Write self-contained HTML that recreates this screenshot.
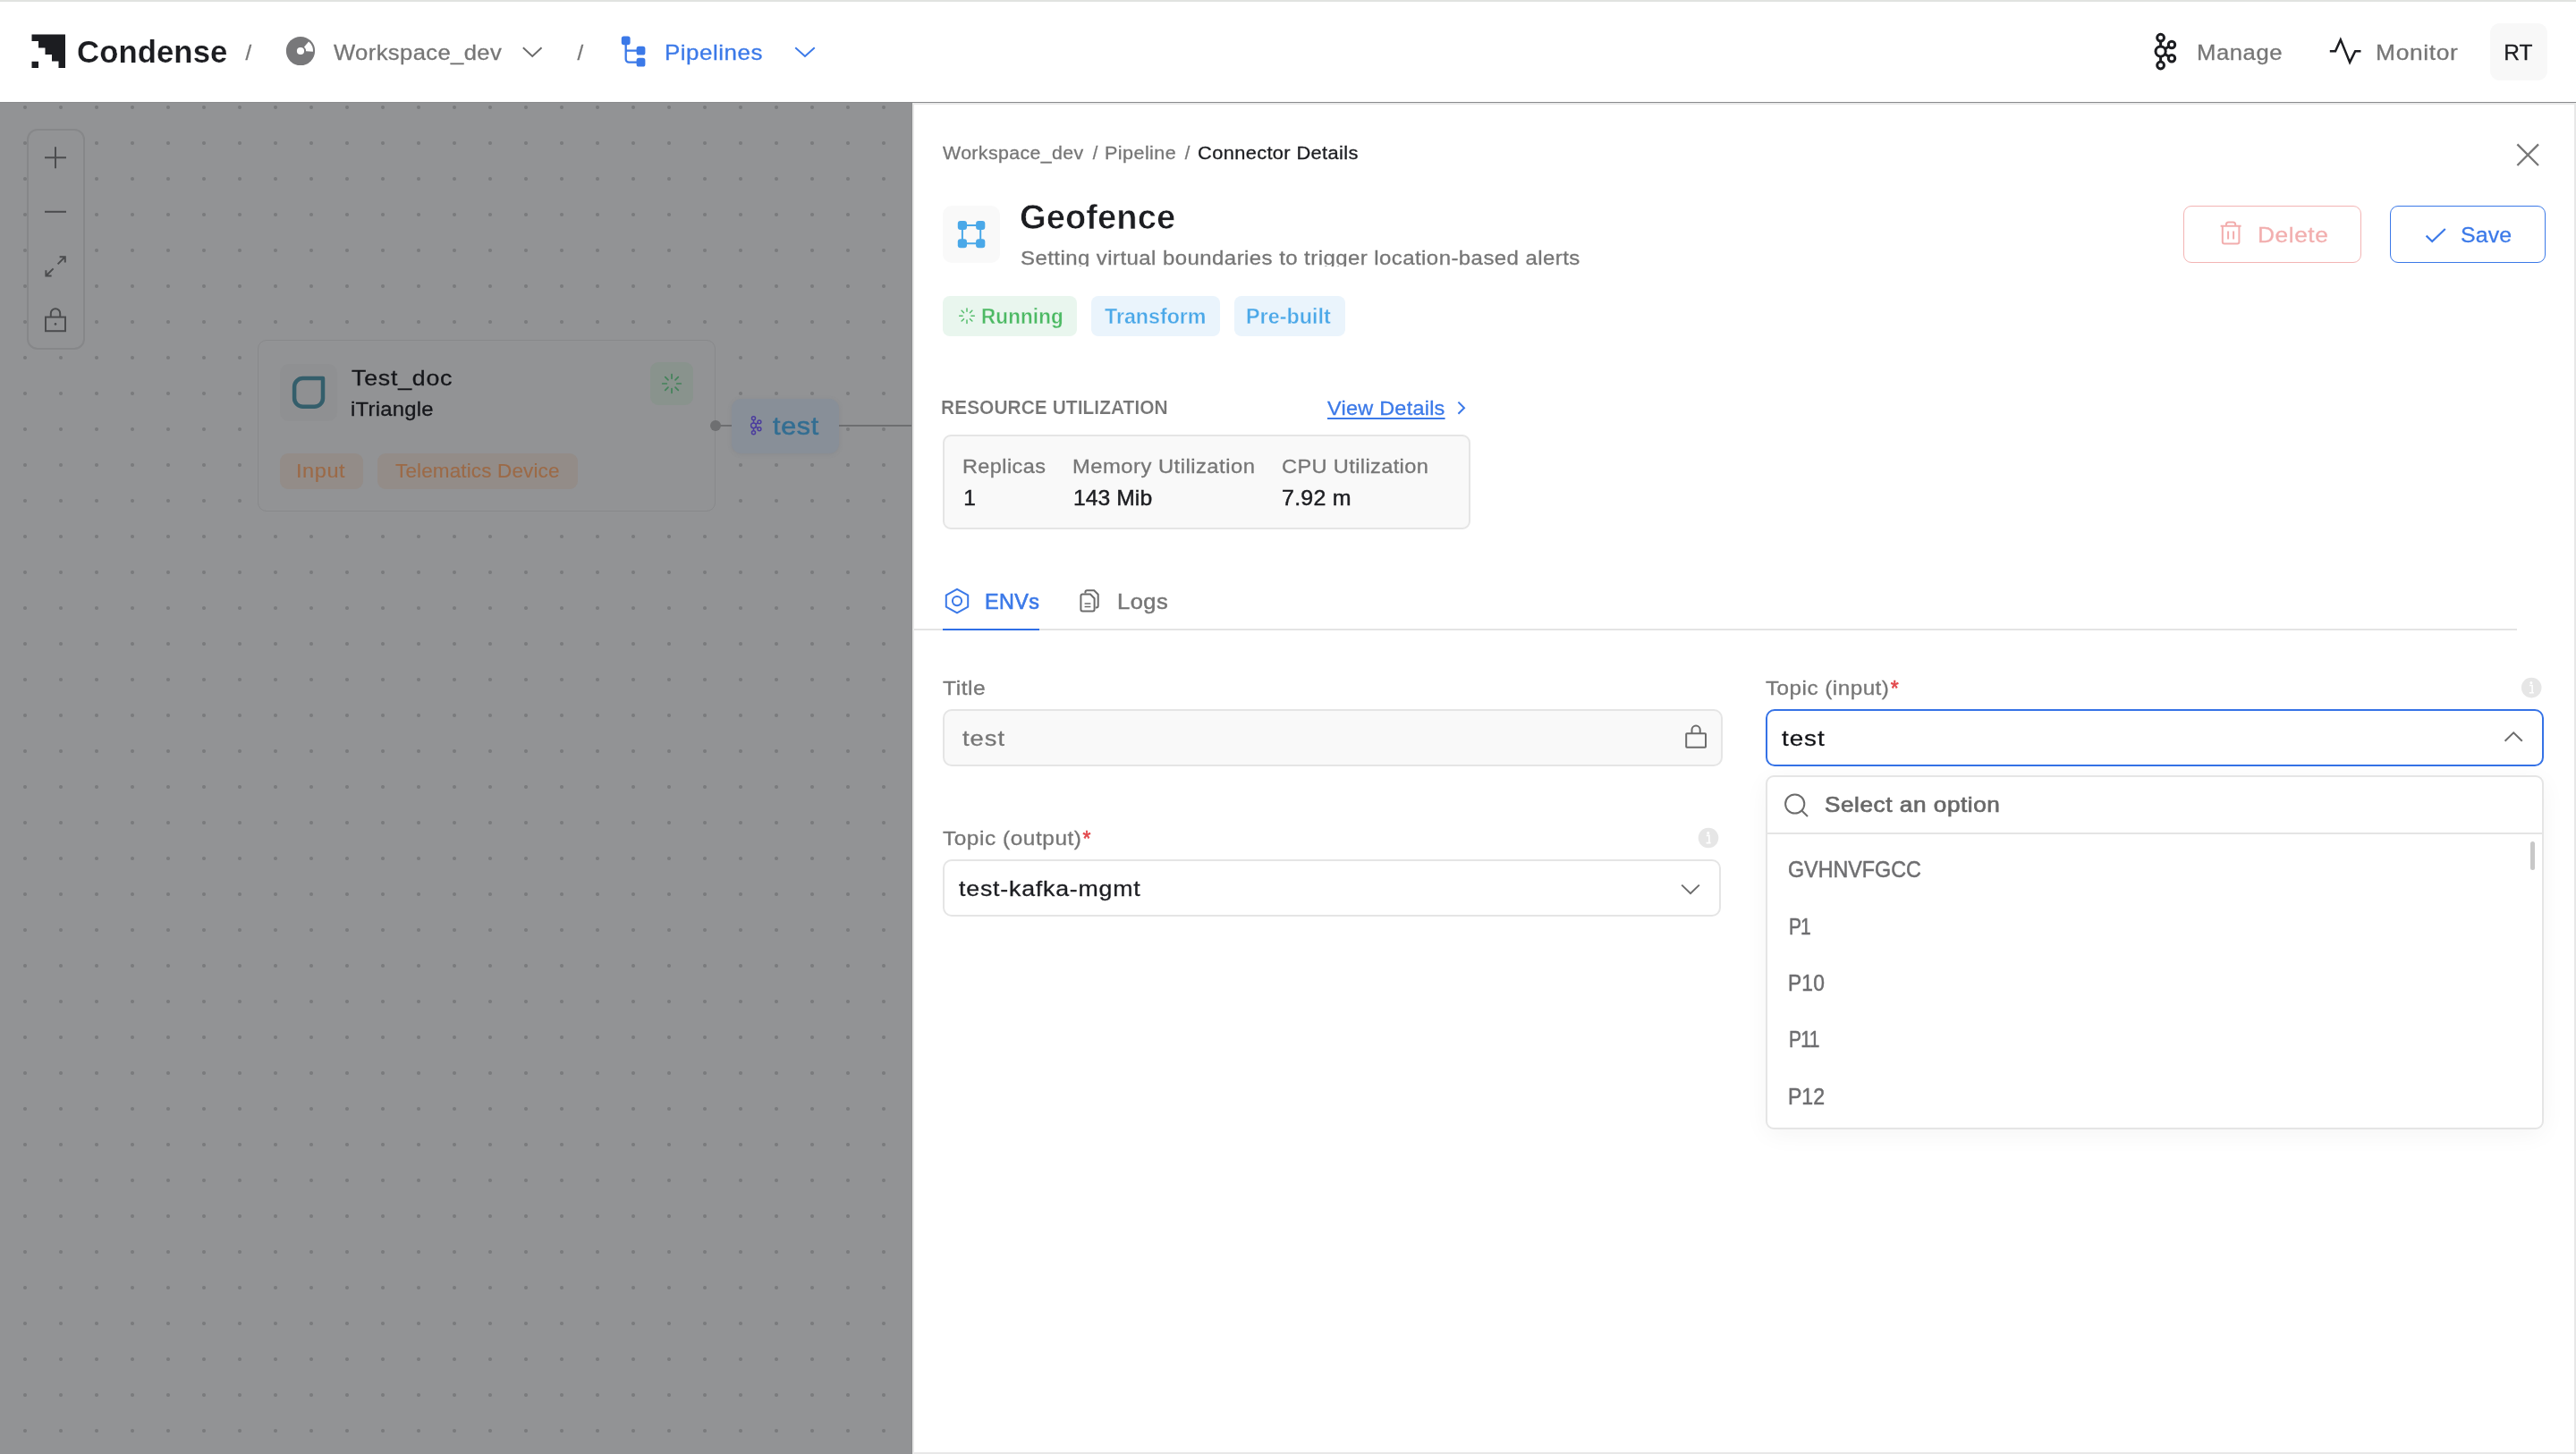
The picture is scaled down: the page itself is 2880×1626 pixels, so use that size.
<!DOCTYPE html>
<html lang="en"><head><meta charset="utf-8"><title>Condense - Connector Details</title>
<meta name="viewport" content="width=2880">
<style>
*{box-sizing:border-box;margin:0;padding:0}
html,body{width:2880px;height:1626px;overflow:hidden;background:#fff}
body{position:relative;font-family:'Liberation Sans',sans-serif;-webkit-font-smoothing:antialiased}
.b,.t{position:absolute;display:block}
.t{white-space:nowrap;transform-origin:0 50%}
header,main,aside,.dd{will-change:transform}
header{position:absolute;left:0;top:0;width:2880px;height:114px;background:#fff;border-top:2px solid #e1e3e0}
main{position:absolute;left:0;top:114px;width:2880px;height:1512px;background-color:#929395;
 background-image:radial-gradient(circle at 20px 20px,#7a7b7d 0,#7a7b7d 1.5px,rgba(122,123,125,0) 2.5px);
 background-size:40px 40px;background-position:8px -15px;border-top:1px solid #8a8b8d}
aside{position:absolute;left:1020px;top:115px;width:1860px;height:1511px;background:#fff;border:2px solid #e8e8e8;box-shadow:-1px 0 0 #8c8d8f}
.dd{position:absolute;left:1974px;top:867px;width:870px;height:396px;background:#fff;border:2px solid #e5e5e5;border-radius:9px;
 box-shadow:0 6px 28px rgba(0,0,0,.045)}
</style></head>
<body>
<header>
<a class="b" style="left:0;top:0;width:260px;height:110px" title="Condense"><svg class="b" style="left:34px;top:34px;width:42px;height:42px;" viewBox="34 36 42 42" aria-hidden="true"><path fill="#1c1d21" d="M35.5 38.4H73.0V75.9H65.5V68.4H58.0V60.9H50.5V53.4H43.0V45.9H35.5ZM35.5 68.7H43.0V75.9H35.5Z"/></svg><span class="t" style="left:86.2px;top:35.1px;font:700 35.7px/43px 'Liberation Sans',sans-serif;color:#1c1d21;letter-spacing:0.07px;transform:scaleX(0.973);-webkit-text-stroke:0.2px #fff;">Condense</span></a>
<span class="t" style="left:274.5px;top:42.2px;font:400 24px/29px 'Liberation Sans',sans-serif;color:#767676;-webkit-text-stroke:0.3px #767676;">/</span>
<svg class="b" style="left:318px;top:37px;width:36px;height:36px;" viewBox="318 39 36 36" aria-hidden="true"><circle cx="336" cy="57" r="16.1" fill="#78787a"/><path fill="#fff" d="M340.00 52.40L345.18 46.43A14 14 0 0 1 349.97 57.85L342.09 57.37A6.1 6.1 0 0 0 340.00 52.40Z"/><circle cx="336" cy="57" r="4.1" fill="#fff"/></svg>
<span class="t" style="left:373.4px;top:42.0px;font:400 24.5px/29px 'Liberation Sans',sans-serif;color:#767676;letter-spacing:0.37px;transform:scaleX(1.045);-webkit-text-stroke:0.3px #767676;">Workspace_dev</span>
<svg class="b" style="left:580px;top:46px;width:30px;height:20px;" viewBox="580 48 30 20" aria-hidden="true"><path d="M585.6 54L595.2 63L604.8 54" fill="none" stroke="#6a6a6a" stroke-width="2" stroke-linecap="square" stroke-linejoin="miter"/></svg>
<span class="t" style="left:645.5px;top:42.2px;font:400 24px/29px 'Liberation Sans',sans-serif;color:#767676;-webkit-text-stroke:0.3px #767676;">/</span>
<svg class="b" style="left:692px;top:36px;width:32px;height:40px;" viewBox="692 38 32 40" aria-hidden="true"><rect x="694.8" y="40.4" width="9.8" height="9.8" rx="2.6" fill="#3b79e8"/><rect x="711.6" y="51.8" width="9.8" height="9.8" rx="2.6" fill="#3b79e8"/><rect x="711.6" y="64.8" width="9.8" height="9.8" rx="2.6" fill="#3b79e8"/><path d="M699.7 49V66.2a3.5 3.5 0 0 0 3.5 3.5H713M699.7 56.7H713" fill="none" stroke="#3b79e8" stroke-width="2.3"/></svg>
<span class="t" style="left:743.0px;top:42.0px;font:400 24.5px/29px 'Liberation Sans',sans-serif;color:#3b79e8;letter-spacing:0.47px;transform:scaleX(1.060);-webkit-text-stroke:0.3px #3b79e8;">Pipelines</span>
<svg class="b" style="left:884px;top:46px;width:32px;height:20px;" viewBox="884 48 32 20" aria-hidden="true"><path d="M890 54L900.0 63L910 54" fill="none" stroke="#3b79e8" stroke-width="2" stroke-linecap="square" stroke-linejoin="miter"/></svg>
<svg class="b" style="left:2404px;top:32px;width:36px;height:48px;" viewBox="2404 34 36 48" aria-hidden="true"><g fill="none" stroke="#1c1d21" stroke-width="3.0"><circle cx="2415.60" cy="57.60" r="5.60"/><circle cx="2415.60" cy="42.20" r="3.90"/><circle cx="2415.60" cy="73.00" r="3.90"/><circle cx="2428.00" cy="50.00" r="3.70"/><circle cx="2428.00" cy="65.20" r="3.70"/><path d="M2415.60 52.00L2415.60 46.10"/><path d="M2415.60 63.20L2415.60 69.10"/><path d="M2420.50 54.70L2424.70 52.00"/><path d="M2420.50 60.50L2424.70 63.20"/></g></svg>
<span class="t" style="left:2456.0px;top:42.0px;font:400 24.5px/29px 'Liberation Sans',sans-serif;color:#767676;letter-spacing:0.55px;transform:scaleX(1.046);-webkit-text-stroke:0.3px #767676;">Manage</span>
<svg class="b" style="left:2602px;top:36px;width:40px;height:38px;" viewBox="2602 38 40 38" aria-hidden="true"><path d="M2604.8 57.3H2611L2616.8 44.4L2627.1 69.6L2633.2 57.3H2639.5" fill="none" stroke="#1c1d21" stroke-width="2.5" stroke-linejoin="miter" stroke-miterlimit="10"/></svg>
<span class="t" style="left:2656.2px;top:42.0px;font:400 24.5px/29px 'Liberation Sans',sans-serif;color:#767676;letter-spacing:0.60px;transform:scaleX(1.077);-webkit-text-stroke:0.3px #767676;">Monitor</span>
<div class="b" style="left:2784px;top:24px;width:64px;height:64px;background:#f8f8f8;border-radius:11px"></div>
<span class="t" style="left:2799.2px;top:42.0px;font:400 24.5px/29px 'Liberation Sans',sans-serif;color:#1c1d21;-webkit-text-stroke:0.3px #1c1d21;">RT</span>
</header>
<main>
<nav class="b" style="left:30px;top:29px;width:65px;height:247px;border:2px solid #868789;border-radius:12px;background:#929395"><svg class="b" style="left:14px;top:14px;width:32px;height:32px;" viewBox="46 160 32 32" aria-hidden="true"><path d="M50 176.2H74M62 164.2V188.2" stroke="#4b4c4e" stroke-width="2" fill="none"/></svg><svg class="b" style="left:14px;top:78px;width:32px;height:26px;" viewBox="46 224 32 26" aria-hidden="true"><path d="M50 236.8H74" stroke="#4b4c4e" stroke-width="2" fill="none"/></svg><svg class="b" style="left:14px;top:136px;width:32px;height:32px;" viewBox="46 282 32 32" aria-hidden="true"><path d="M64.6 295.4L72.6 287.4M66.6 287.3H72.8V293.5M59.6 300.4L51.6 308.2M51.4 302.2V308.4H57.6" stroke="#4b4c4e" stroke-width="2" fill="none"/></svg><svg class="b" style="left:14px;top:194px;width:32px;height:36px;" viewBox="46 340 32 36" aria-hidden="true"><rect x="51" y="354.6" width="22" height="15.6" fill="none" stroke="#4b4c4e" stroke-width="2"/><path d="M56.8 354.6V350.4a5.2 5.2 0 0 1 10.4 0V354.6" fill="none" stroke="#4b4c4e" stroke-width="2"/><circle cx="62" cy="362.4" r="1.3" fill="#4b4c4e"/></svg></nav>
<svg class="b" style="left:800px;top:355px;width:220px;height:12px;" viewBox="800 470 220 12" aria-hidden="true"><path d="M800 476H818M937 476H1020" stroke="#6d6e70" stroke-width="2" fill="none"/></svg>
<div class="b" style="left:288px;top:265px;width:512px;height:192px;border:1.5px solid #88898b;border-radius:10px;background:#929395"></div>
<div class="b" style="left:313px;top:292px;width:64px;height:64px;border-radius:10px;background:#8f9092"></div>
<svg class="b" style="left:324px;top:303px;width:42px;height:42px;" viewBox="324 418 42 42" aria-hidden="true"><path d="M361 423.1H338.6a9.5 9.5 0 0 0 -9.5 9.5V445.3a9.5 9.5 0 0 0 9.5 9.5H351.5a9.5 9.5 0 0 0 9.5 -9.5Z" fill="none" stroke="#345e6b" stroke-width="4.5" stroke-linejoin="round"/></svg>
<span class="t" style="left:392.9px;top:292.8px;font:400 24.5px/29px 'Liberation Sans',sans-serif;color:#15161a;letter-spacing:0.73px;transform:scaleX(1.090);-webkit-text-stroke:0.3px #15161a;">Test_doc</span>
<span class="t" style="left:392.0px;top:328.5px;font:400 22.5px/27px 'Liberation Sans',sans-serif;color:#15161a;letter-spacing:0.25px;transform:scaleX(1.059);-webkit-text-stroke:0.3px #15161a;">iTriangle</span>
<div class="b" style="left:727px;top:290px;width:48px;height:48px;border-radius:9px;background:#89938d"></div>
<svg class="b" style="left:738px;top:301px;width:26px;height:26px;" viewBox="738 416 26 26" aria-hidden="true"><path d="M756.70 429.00L761.30 429.00M755.03 433.03L758.28 436.28M751.00 434.70L751.00 439.30M746.97 433.03L743.72 436.28M745.30 429.00L740.70 429.00M746.97 424.97L743.72 421.72M751.00 423.30L751.00 418.70M755.03 424.97L758.28 421.72" stroke="#43825a" stroke-width="1.7" stroke-linecap="round" fill="none"/></svg>
<div class="b" style="left:313px;top:392px;width:93px;height:40px;border-radius:9px;background:#938c88"></div>
<span class="t" style="left:331.2px;top:399.1px;font:400 22px/26px 'Liberation Sans',sans-serif;color:#9c6a47;letter-spacing:0.53px;transform:scaleX(1.070);-webkit-text-stroke:0.15px #9c6a47;">Input</span>
<div class="b" style="left:422px;top:392px;width:224px;height:40px;border-radius:9px;background:#938c88"></div>
<span class="t" style="left:442.4px;top:399.1px;font:400 22px/26px 'Liberation Sans',sans-serif;color:#9c6a47;letter-spacing:0.14px;transform:scaleX(1.022);-webkit-text-stroke:0.15px #9c6a47;">Telematics Device</span>
<div class="b" style="left:794px;top:355px;width:12px;height:12px;border-radius:50%;background:#6e6f71"></div>
<div class="b" style="left:818px;top:331px;width:120px;height:61px;border-radius:11px;background:#888f98;box-shadow:0 1px 5px rgba(95,100,110,.16)"></div>
<svg class="b" style="left:836px;top:348px;width:20px;height:26px;" viewBox="836 463 20 26" aria-hidden="true"><g fill="none" stroke="#4b3c9e" stroke-width="1.5"><circle cx="842.50" cy="475.80" r="2.91"/><circle cx="842.50" cy="467.79" r="2.03"/><circle cx="842.50" cy="483.81" r="2.03"/><circle cx="848.95" cy="471.85" r="1.92"/><circle cx="848.95" cy="479.75" r="1.92"/><path d="M842.50 472.89L842.50 469.82"/><path d="M842.50 478.71L842.50 481.78"/><path d="M845.05 474.29L847.23 472.89"/><path d="M845.05 477.31L847.23 478.71"/></g></svg>
<span class="t" style="left:864.2px;top:343.9px;font:400 28.5px/34px 'Liberation Sans',sans-serif;color:#336e92;letter-spacing:0.67px;transform:scaleX(1.068);-webkit-text-stroke:0.6px #336e92;">test</span>
</main>
<aside>
<nav class="b" style="left:0;top:0;width:600px;height:90px"><span class="t" style="left:31.9px;top:41.0px;font:400 20.5px/25px 'Liberation Sans',sans-serif;color:#767676;letter-spacing:0.36px;transform:scaleX(1.041);-webkit-text-stroke:0.3px #767676;">Workspace_dev</span><span class="t" style="left:199.8px;top:41.7px;font:400 20px/24px 'Liberation Sans',sans-serif;color:#767676;-webkit-text-stroke:0.3px #767676;">/</span><span class="t" style="left:213.2px;top:41.0px;font:400 20.5px/25px 'Liberation Sans',sans-serif;color:#767676;letter-spacing:0.40px;transform:scaleX(1.053);-webkit-text-stroke:0.3px #767676;">Pipeline</span><span class="t" style="left:302.8px;top:41.7px;font:400 20px/24px 'Liberation Sans',sans-serif;color:#767676;-webkit-text-stroke:0.3px #767676;">/</span><span class="t" style="left:317.1px;top:41.0px;font:400 20.5px/25px 'Liberation Sans',sans-serif;color:#1c1d21;letter-spacing:0.34px;transform:scaleX(1.065);-webkit-text-stroke:0.3px #1c1d21;">Connector Details</span></nav>
<svg class="b" style="left:1786px;top:38px;width:36px;height:36px;" viewBox="2808 155 36 36" aria-hidden="true"><path d="M2814.4 161.4L2838 185M2838 161.4L2814.4 185" stroke="#777" stroke-width="2.3" fill="none"/></svg>
<div class="b" style="left:32px;top:113px;width:64px;height:64px;border-radius:10px;background:#f9f9f9"></div>
<svg class="b" style="left:46px;top:127px;width:36px;height:36px;" viewBox="1068 244 36 36" aria-hidden="true"><path d="M1075.9 252H1096.2V272.2H1075.9Z" fill="none" stroke="#4aa8e8" stroke-width="2"/><rect x="1070.8" y="247" width="10.2" height="10" rx="3" fill="#4aa8e8"/><rect x="1070.8" y="267.2" width="10.2" height="10" rx="3" fill="#4aa8e8"/><rect x="1091.1" y="247" width="10.2" height="10" rx="3" fill="#4aa8e8"/><rect x="1091.1" y="267.2" width="10.2" height="10" rx="3" fill="#4aa8e8"/></svg>
<h1 class="t" style="left:118.4px;top:103.1px;font:700 38px/46px 'Liberation Sans',sans-serif;color:#1c1d21;letter-spacing:0.10px;transform:scaleX(1.001);-webkit-text-stroke:0.6px #fff;">Geofence</h1>
<div class="b" style="left:108px;top:149px;width:700px;height:32.4px;overflow:hidden"><p class="t" style="left:11.3px;top:8.7px;font:400 22.5px/27px 'Liberation Sans',sans-serif;color:#767676;letter-spacing:0.41px;transform:scaleX(1.066);-webkit-text-stroke:0.3px #767676;">Setting virtual boundaries to trigger location-based alerts</p></div>
<div class="b" style="left:32px;top:214px;width:150px;height:45px;border-radius:8px;background:#e9f6ee"></div>
<svg class="b" style="left:46px;top:224px;width:26px;height:26px;" viewBox="1068 341 26 26" aria-hidden="true"><path d="M1085.90 353.20L1089.30 353.20M1084.46 356.66L1086.87 359.07M1081.00 358.10L1081.00 361.50M1077.54 356.66L1075.13 359.07M1076.10 353.20L1072.70 353.20M1077.54 349.74L1075.13 347.33M1081.00 348.30L1081.00 344.90M1084.46 349.74L1086.87 347.33" stroke="#55bd6c" stroke-width="1.5" stroke-linecap="round" fill="none"/></svg>
<span class="t" style="left:75.4px;top:222.9px;font:700 23.5px/28px 'Liberation Sans',sans-serif;color:#4cb963;letter-spacing:0.17px;transform:scaleX(0.953);-webkit-text-stroke:0.35px #e9f6ee;">Running</span>
<div class="b" style="left:198px;top:214px;width:144px;height:45px;border-radius:8px;background:#eaf4fc"></div>
<span class="t" style="left:213.1px;top:222.9px;font:700 23.5px/28px 'Liberation Sans',sans-serif;color:#4ba8e8;letter-spacing:-0.02px;transform:scaleX(0.989);-webkit-text-stroke:0.35px #eaf4fc;">Transform</span>
<div class="b" style="left:358px;top:214px;width:124px;height:45px;border-radius:8px;background:#eaf4fc"></div>
<span class="t" style="left:371.1px;top:222.9px;font:700 23.5px/28px 'Liberation Sans',sans-serif;color:#4ba8e8;letter-spacing:0.05px;transform:scaleX(0.991);-webkit-text-stroke:0.35px #eaf4fc;">Pre-built</span>
<div class="b" style="left:1419px;top:113px;width:199px;height:64px;border:1.5px solid #f3b4b4;border-radius:9px;background:#fff"></div>
<svg class="b" style="left:1458px;top:128px;width:30px;height:32px;" viewBox="2480 245 30 32" aria-hidden="true"><path d="M2482.6 252.8H2505.6M2488.9 252.6V251.2a2.6 2.6 0 0 1 2.6 -2.6H2496.6a2.6 2.6 0 0 1 2.6 2.6V252.6M2484.8 253V270.4a2 2 0 0 0 2 2H2501.4a2 2 0 0 0 2 -2V253M2491.1 258.6V267.4M2497.1 258.6V267.4" fill="none" stroke="#f2adad" stroke-width="2"/></svg>
<span class="t" style="left:1502.0px;top:130.9px;font:400 24.5px/29px 'Liberation Sans',sans-serif;color:#f2aeae;letter-spacing:0.54px;transform:scaleX(1.072);-webkit-text-stroke:0.3px #f2aeae;">Delete</span>
<div class="b" style="left:1650px;top:113px;width:174px;height:64px;border:1.5px solid #3b79e8;border-radius:9px;background:#fff"></div>
<svg class="b" style="left:1686px;top:133px;width:30px;height:26px;" viewBox="2708 250 30 26" aria-hidden="true"><path d="M2712.6 263.6L2719.2 270L2733.8 256" fill="none" stroke="#3b79e8" stroke-width="2.2"/></svg>
<span class="t" style="left:1729.3px;top:130.9px;font:400 24.5px/29px 'Liberation Sans',sans-serif;color:#3b79e8;letter-spacing:0.12px;transform:scaleX(1.016);-webkit-text-stroke:0.3px #3b79e8;">Save</span>
<h2 class="t" style="left:30.4px;top:325.6px;font:700 21.5px/26px 'Liberation Sans',sans-serif;color:#767676;letter-spacing:0.05px;transform:scaleX(0.972);-webkit-text-stroke:0.2px #fff;">RESOURCE UTILIZATION</h2>
<a class="t" style="left:462.2px;top:326.4px;font:400 22.5px/27px 'Liberation Sans',sans-serif;color:#3b79e8;letter-spacing:0.24px;transform:scaleX(1.042);-webkit-text-stroke:0.3px #3b79e8;text-decoration:underline;text-decoration-thickness:2px;text-underline-offset:3px;">View Details</a>
<svg class="b" style="left:602px;top:327px;width:20px;height:24px;" viewBox="1624 444 20 24" aria-hidden="true"><path d="M1630.4 449.6L1637 456.2L1630.4 462.8" fill="none" stroke="#3b79e8" stroke-width="2"/></svg>
<div class="b" style="left:32px;top:369px;width:590px;height:106px;border:2px solid #e5e5e5;border-radius:9px;background:#f9f9f9"></div>
<span class="t" style="left:54.2px;top:390.7px;font:400 22.5px/27px 'Liberation Sans',sans-serif;color:#767676;letter-spacing:0.39px;transform:scaleX(1.044);-webkit-text-stroke:0.3px #767676;">Replicas</span>
<span class="t" style="left:55.2px;top:424.6px;font:400 24.5px/29px 'Liberation Sans',sans-serif;color:#1c1d21;-webkit-text-stroke:0.45px #1c1d21;">1</span>
<span class="t" style="left:176.6px;top:390.7px;font:400 22.5px/27px 'Liberation Sans',sans-serif;color:#767676;letter-spacing:0.44px;transform:scaleX(1.059);-webkit-text-stroke:0.3px #767676;">Memory Utilization</span>
<span class="t" style="left:178.2px;top:424.6px;font:400 24.5px/29px 'Liberation Sans',sans-serif;color:#1c1d21;letter-spacing:0.03px;transform:scaleX(1.009);-webkit-text-stroke:0.45px #1c1d21;">143 Mib</span>
<span class="t" style="left:411.2px;top:390.7px;font:400 22.5px/27px 'Liberation Sans',sans-serif;color:#767676;letter-spacing:0.36px;transform:scaleX(1.048);-webkit-text-stroke:0.3px #767676;">CPU Utilization</span>
<span class="t" style="left:411.2px;top:424.6px;font:400 24.5px/29px 'Liberation Sans',sans-serif;color:#1c1d21;letter-spacing:0.25px;transform:scaleX(1.020);-webkit-text-stroke:0.45px #1c1d21;">7.92 m</span>
<div class="b" style="left:0px;top:586px;width:1792px;height:2px;background:#e4e4e4"></div>
<svg class="b" style="left:32px;top:539px;width:32px;height:32px;" viewBox="1054 656 32 32" aria-hidden="true"><path d="M1070 658.8L1082.2 665.6V678.6L1070 685.4L1057.8 678.6V665.6Z" fill="none" stroke="#3b79e8" stroke-width="2" stroke-linejoin="round"/><circle cx="1070" cy="672.1" r="5.1" fill="none" stroke="#3b79e8" stroke-width="2"/></svg>
<span class="t" style="left:78.8px;top:541.0px;font:400 24.5px/29px 'Liberation Sans',sans-serif;color:#3b79e8;letter-spacing:0.38px;transform:scaleX(0.954);-webkit-text-stroke:0.7px #3b79e8;">ENVs</span>
<div class="b" style="left:32px;top:586px;width:108px;height:2px;background:#2f6fe6"></div>
<svg class="b" style="left:182px;top:539px;width:28px;height:32px;" viewBox="1204 656 28 32" aria-hidden="true"><path d="M1213.4 663.4V662.2a2 2 0 0 1 2 -2H1223.2L1227.7 664.7V677.5a2 2 0 0 1 -2 2H1224.8" fill="none" stroke="#6c6c6c" stroke-width="2"/><path d="M1210.4 664.6H1219L1223.6 669.2V681.5a2 2 0 0 1 -2 2H1210.4a2 2 0 0 1 -2 -2V666.6a2 2 0 0 1 2 -2Z" fill="none" stroke="#6c6c6c" stroke-width="2"/><path d="M1212.6 675H1219.4M1212.6 678.5H1219.4" fill="none" stroke="#6c6c6c" stroke-width="1.7"/></svg>
<span class="t" style="left:227.1px;top:541.0px;font:400 24.5px/29px 'Liberation Sans',sans-serif;color:#767676;letter-spacing:0.46px;transform:scaleX(1.039);-webkit-text-stroke:0.5px #767676;">Logs</span>
<label class="t" style="left:32.0px;top:638.7px;font:400 22.5px/27px 'Liberation Sans',sans-serif;color:#767676;letter-spacing:0.49px;transform:scaleX(1.094);-webkit-text-stroke:0.3px #767676;">Title</label>
<div class="b" style="left:32px;top:676px;width:872px;height:64px;border:2px solid #e5e5e5;border-radius:10px;background:#f9f9f9"></div>
<span class="t" style="left:54.4px;top:693.5px;font:400 24.5px/29px 'Liberation Sans',sans-serif;color:#767676;letter-spacing:0.94px;transform:scaleX(1.113);-webkit-text-stroke:0.3px #767676;">test</span>
<svg class="b" style="left:860px;top:691px;width:28px;height:30px;" viewBox="1882 808 28 30" aria-hidden="true"><rect x="1885.2" y="820.2" width="21.8" height="15.5" rx="0.8" fill="none" stroke="#6c6c6c" stroke-width="2"/><path d="M1891.5 820.2V816.1a4.6 4.6 0 0 1 9.2 0V820.2" fill="none" stroke="#6c6c6c" stroke-width="2"/></svg>
<label class="t" style="left:952.4px;top:639.0px;font:400 22.5px/27px 'Liberation Sans',sans-serif;color:#767676;letter-spacing:0.43px;transform:scaleX(1.080);-webkit-text-stroke:0.3px #767676;">Topic (input)</label>
<span class="t" style="left:1091.8px;top:637.9px;font:400 23px/30px 'Liberation Sans',sans-serif;color:#e2474b;-webkit-text-stroke:0.6px #e2474b">*</span>
<svg class="b" style="left:1796px;top:640px;width:24px;height:24px;" viewBox="2818 757 24 24" aria-hidden="true"><circle cx="2830.2" cy="769.1" r="11.3" fill="#e6e6e6"/><circle cx="2829.8999999999996" cy="763.5" r="1.5" fill="#fff"/><path d="M2828.0 766.5H2831.1V774.4M2827.7999999999997 774.7H2832.7999999999997" stroke="#fff" stroke-width="1.6" fill="none"/></svg>
<div class="b" style="left:952px;top:676px;width:870px;height:64px;border:2px solid #3572e6;border-radius:10px;background:#fff"></div>
<span class="t" style="left:970.2px;top:694.0px;font:400 24.5px/29px 'Liberation Sans',sans-serif;color:#111216;letter-spacing:0.85px;transform:scaleX(1.132);-webkit-text-stroke:0.3px #111216;">test</span>
<svg class="b" style="left:1774px;top:697px;width:28px;height:20px;" viewBox="2796 814 28 20" aria-hidden="true"><path d="M2800.6 828.8L2810.2 819.4L2819.8 828.8" fill="none" stroke="#6c6c6c" stroke-width="2"/></svg>
<label class="t" style="left:32.0px;top:806.9px;font:400 22.5px/27px 'Liberation Sans',sans-serif;color:#767676;letter-spacing:0.51px;transform:scaleX(1.084);-webkit-text-stroke:0.3px #767676;">Topic (output)</label>
<span class="t" style="left:188.6px;top:805.9px;font:400 23px/30px 'Liberation Sans',sans-serif;color:#e2474b;-webkit-text-stroke:0.6px #e2474b">*</span>
<svg class="b" style="left:876px;top:808px;width:24px;height:24px;" viewBox="1898 925 24 24" aria-hidden="true"><circle cx="1910" cy="937" r="11.3" fill="#e6e6e6"/><circle cx="1909.7" cy="931.4" r="1.5" fill="#fff"/><path d="M1907.8 934.4H1910.9V942.3M1907.6 942.6H1912.6" stroke="#fff" stroke-width="1.6" fill="none"/></svg>
<div class="b" style="left:32px;top:844px;width:870px;height:64px;border:2px solid #e5e5e5;border-radius:10px;background:#fff"></div>
<span class="t" style="left:49.9px;top:861.9px;font:400 24.5px/29px 'Liberation Sans',sans-serif;color:#1c1d21;letter-spacing:0.73px;transform:scaleX(1.091);-webkit-text-stroke:0.3px #1c1d21;">test-kafka-mgmt</span>
<svg class="b" style="left:854px;top:867px;width:28px;height:20px;" viewBox="1876 984 28 20" aria-hidden="true"><path d="M1880.2 989.6L1890 999.2L1899.8 989.6" fill="none" stroke="#6c6c6c" stroke-width="2"/></svg>
</aside>
<div class="dd">
<svg class="b" style="left:16px;top:16px;width:32px;height:32px;" viewBox="1992 885 32 32" aria-hidden="true"><circle cx="2006.7" cy="899" r="10.6" fill="none" stroke="#6c6c6c" stroke-width="2"/><path d="M2014.6 906.8L2021 913" stroke="#6c6c6c" stroke-width="2" fill="none"/></svg>
<span class="t" style="left:63.6px;top:15.9px;font:400 24.5px/29px 'Liberation Sans',sans-serif;color:#686868;letter-spacing:0.53px;transform:scaleX(1.066);-webkit-text-stroke:0.7px #686868;">Select an option</span>
<div class="b" style="left:0px;top:62px;width:866px;height:2px;background:#e4e4e4"></div>
<div class="b" style="left:853px;top:72px;width:5.4px;height:32px;border-radius:3px;background:#c8c8c8"></div>
<ul class="b" style="left:0px;top:66px;width:850px;height:326px;list-style:none"><li class="t" style="left:23.3px;top:22.3px;font:400 25px/30px 'Liberation Sans',sans-serif;color:#6e6e70;letter-spacing:-0.02px;transform:scaleX(0.933);-webkit-text-stroke:0.5px #6e6e70;">GVHNVFGCC</li><li class="t" style="left:24.1px;top:86.3px;font:400 25px/30px 'Liberation Sans',sans-serif;color:#6e6e70;letter-spacing:-1.30px;transform:scaleX(0.840);-webkit-text-stroke:0.5px #6e6e70;">P1</li><li class="t" style="left:23.2px;top:149.3px;font:400 25px/30px 'Liberation Sans',sans-serif;color:#6e6e70;letter-spacing:0.15px;transform:scaleX(0.912);-webkit-text-stroke:0.5px #6e6e70;">P10</li><li class="t" style="left:24.1px;top:212.3px;font:400 25px/30px 'Liberation Sans',sans-serif;color:#6e6e70;letter-spacing:-0.80px;transform:scaleX(0.840);-webkit-text-stroke:0.5px #6e6e70;">P11</li><li class="t" style="left:23.2px;top:276.3px;font:400 25px/30px 'Liberation Sans',sans-serif;color:#6e6e70;letter-spacing:-0.05px;transform:scaleX(0.924);-webkit-text-stroke:0.5px #6e6e70;">P12</li></ul>
</div>
<script>(function(){var w=window.innerWidth||2880;if(w>0&&Math.abs(w-2880)>40){document.body.style.zoom=(w/2880);}})();</script>
</body></html>
